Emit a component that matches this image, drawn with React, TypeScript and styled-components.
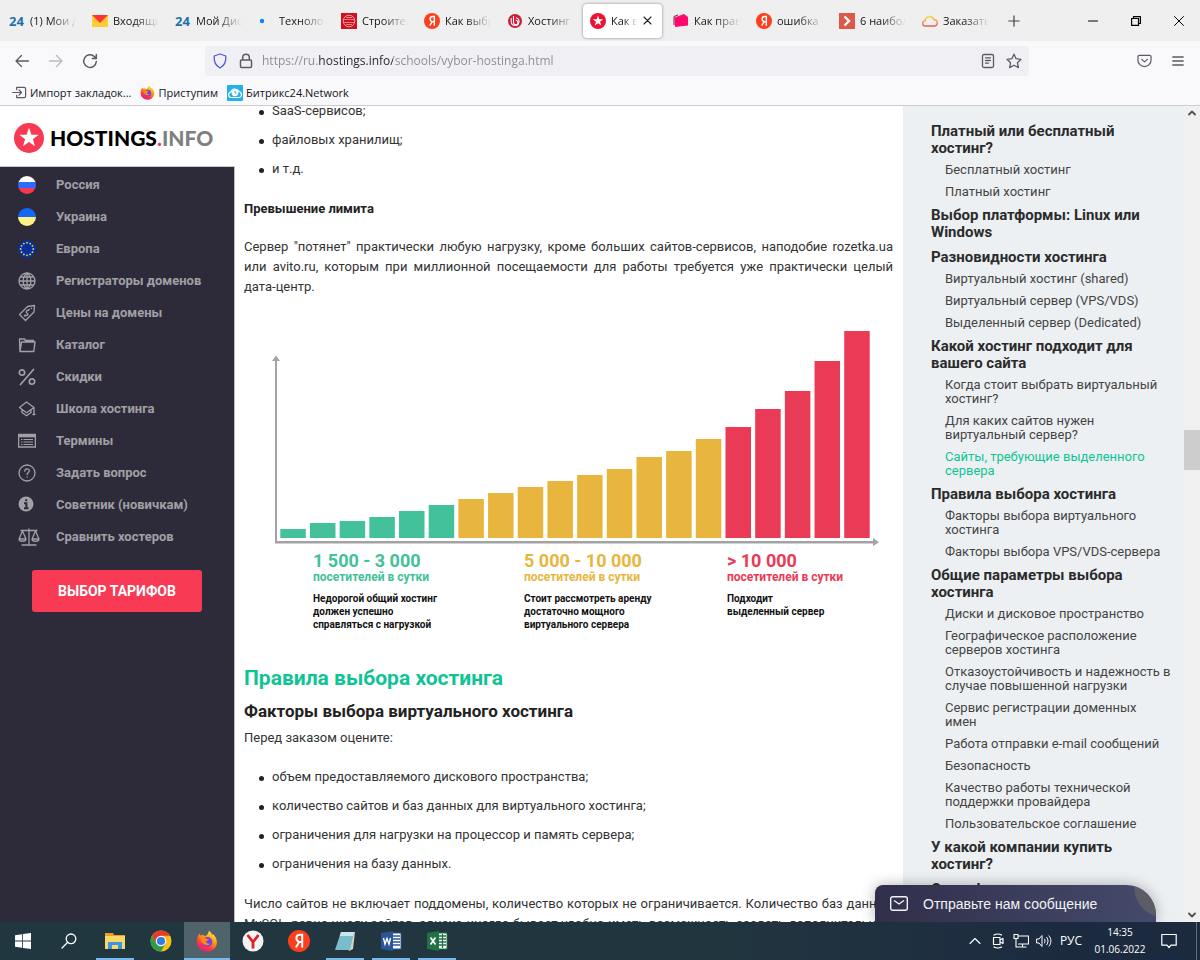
import React from "react";
import styled, { createGlobalStyle, css } from "styled-components";

const GlobalStyle = createGlobalStyle`
  * { box-sizing: border-box; }
  html, body, #root { height: 100%; }
  body { margin: 0; overflow: hidden; }
  button { font: inherit; border: 0; padding: 0; background: none; color: inherit; cursor: pointer; }
  a { color: inherit; text-decoration: none; }
  ul { list-style: none; margin: 0; padding: 0; }
  svg { display: block; flex: none; }
`;

const UI_FONT = `"Open Sans", "Noto Sans", sans-serif`;
const TEXT_FONT = `Roboto, "Noto Sans", sans-serif`;

const Screen = styled.div`
  display: flex;
  flex-direction: column;
  height: 100vh;
  background: #fff;
`;

/* ---------- Browser chrome ---------- */

const TabStrip = styled.div`
  display: flex;
  align-items: center;
  flex: none;
  height: 41px;
  padding-left: 1px;
  background: #efefef;
  font: 11px/16px ${UI_FONT};
  color: #15141a;
`;

const Tab = styled.button<{ $active?: boolean }>`
  display: flex;
  align-items: center;
  gap: 5px;
  flex: none;
  width: 83px;
  height: 34px;
  padding: 0 7px 0 8px;
  text-align: left;
  ${(p) =>
    p.$active &&
    css`
      width: 79px;
      margin: 0 3px 0 1px;
      padding: 0 10px 0 7px;
      border-radius: 4px;
      background: #fff;
      box-shadow: 0 0 3px rgba(0, 0, 0, 0.45);
    `}
`;

const TabTitle = styled.span`
  flex: 1;
  min-width: 0;
  overflow: hidden;
  white-space: nowrap;
  mask-image: linear-gradient(to right, #000 45%, transparent 98%);
`;

const NewTab = styled.button`
  display: flex;
  align-items: center;
  justify-content: center;
  width: 34px;
  height: 34px;
`;

const WindowButtons = styled.div`
  display: flex;
  margin-left: auto;
`;

const WindowButton = styled.button`
  display: flex;
  align-items: center;
  justify-content: center;
  width: 43px;
  height: 41px;
`;

const NavBar = styled.div`
  display: flex;
  align-items: center;
  flex: none;
  height: 39px;
  padding: 0 5px;
  background: #f9f9fb;
`;

const IconButton = styled.button`
  display: flex;
  align-items: center;
  justify-content: center;
  flex: none;
  width: 34px;
  height: 30px;
`;

const AddressBox = styled.div`
  display: flex;
  align-items: center;
  flex: 1;
  height: 30px;
  margin: 0 98px;
  padding: 0 2px 0 6px;
  border-radius: 4px;
  background: #f0f0f4;
`;

const SmallIconButton = styled(IconButton)`
  width: 26px;
  height: 26px;
`;

const AddressShield = styled(SmallIconButton)`
  width: 18px;
  margin-right: 4px;
`;

const AddressInput = styled.input`
  flex: 1;
  min-width: 0;
  height: 22px;
  margin-left: 3px;
  padding: 0;
  border: 0;
  outline: 0;
  font: 12px/20px ${UI_FONT};
  color: transparent;
  background: linear-gradient(to right, #8a8a92 56px, #25242c 56px 131px, #8a8a92 131px);
  background-clip: text;
`;

const BookmarkBar = styled.nav`
  display: flex;
  align-items: center;
  gap: 9px;
  flex: none;
  height: 26px;
  padding: 0 12px;
  border-bottom: 1px solid #cccccf;
  background: #f9f9fb;
  font: 11px/16px ${UI_FONT};
  color: #15141a;
`;

const Bookmark = styled.a`
  display: flex;
  align-items: center;
  gap: 3px;
  white-space: nowrap;
`;

/* ---------- Page ---------- */

const Page = styled.div`
  position: relative;
  display: flex;
  flex: 1;
  min-height: 0;
  overflow: hidden;
  font-family: ${TEXT_FONT};
`;

const Sidebar = styled.aside`
  display: flex;
  flex-direction: column;
  flex: none;
  width: 235px;
  border-right: 1px solid #b9b9c2;
  background: #2d2b39;
`;

const LogoLink = styled.a`
  display: flex;
  align-items: center;
  gap: 6px;
  height: 61px;
  margin-right: -1px;
  padding: 4px 14px 0;
  border-bottom: 1px solid #c9c9cf;
  background: #fff;
  font: 900 21px/30px Lato, sans-serif;
  color: #000;
`;

const LogoAccent = styled.span<{ $color: string }>`
  color: ${(p) => p.$color};
`;

const MenuItem = styled.a`
  display: flex;
  align-items: center;
  height: 32px;
  padding-left: 18px;
  font-size: 13px;
  line-height: 20px;
  font-weight: 700;
  color: #a1a0a5;
`;

const MenuList = styled.ul`
  padding-top: 2px;
`;

const MenuIcon = styled.span`
  display: flex;
  width: 38px;
`;

const TariffButton = styled.button`
  height: 42px;
  margin: 17px 32px 0;
  border-radius: 3px;
  background: #f83a55;
  font-size: 14px;
  font-weight: 700;
  color: #fff;
`;

const Article = styled.main`
  flex: 1;
  min-width: 0;
  overflow: hidden;
  padding: 0 10px 0 9px;
  font-size: 13px;
  line-height: 20px;
  color: #333;
`;

const BulletList = styled.ul<{ $scrolled?: boolean }>`
  display: flex;
  flex-direction: column;
  gap: 9px;
  padding-left: 28px;
  margin: ${(p) => (p.$scrolled ? "-5px 0 20px" : "19px 0 20px")};
`;

const Bullet = styled.li`
  display: flex;
  align-items: center;
  white-space: nowrap;
  &::before {
    content: "";
    width: 5px;
    height: 5px;
    margin: 2px 8px 0 -13px;
    border-radius: 50%;
    background: #222;
  }
`;

const Strong = styled.h4`
  margin: 0 0 18px;
  font-size: 13px;
  line-height: 20px;
  color: #222;
`;

const Paragraph = styled.p`
  margin: 0;
`;

const JustifiedLine = styled.span`
  display: block;
  white-space: nowrap;
  text-align: justify;
  text-align-last: justify;
`;

const Figure = styled.figure`
  margin: 23px 0 0;
`;

const ChartSvg = styled.svg`
  width: 100%;
  height: auto;
`;

const Legend = styled.figcaption`
  display: grid;
  grid-template-columns: 211fr 203fr 166fr;
  padding: 5px 0 0 69px;
`;

const LegendItem = styled.div<{ $color: string }>`
  color: ${(p) => p.$color};
  font-weight: 700;
  white-space: pre-line;
`;

const LegendRange = styled.div`
  font-size: 18px;
  line-height: 19px;
`;

const LegendUnit = styled.div`
  font-size: 12px;
  line-height: 14px;
`;

const LegendText = styled.div`
  margin-top: 8px;
  font-size: 10px;
  line-height: 13px;
  color: #111;
`;

const SectionTitle = styled.h2`
  margin: 32px 0 0;
  font-size: 21px;
  line-height: 30px;
  color: #0fc494;
`;

const SubTitle = styled.h3`
  margin: 6px 0 5px;
  font-size: 17px;
  line-height: 24px;
  color: #222;
`;

const Toc = styled.nav`
  flex: none;
  width: 281px;
  overflow: hidden;
  padding: 17px 0 0 28px;
  background: #edf0f3;
  white-space: pre;
`;

const TocHeading = styled.a`
  display: block;
  margin-bottom: 8px;
  font-size: 15px;
  line-height: 17px;
  font-weight: 700;
  color: #2b2b2b;
`;

const TocItem = styled.a<{ $active?: boolean }>`
  display: block;
  margin-bottom: 8px;
  padding-left: 14px;
  font-size: 13px;
  line-height: 14px;
  color: ${(p) => (p.$active ? "#0fc494" : "#444")};
  ${TocHeading} + & {
    margin-top: -2px;
  }
`;

const ScrollBar = styled.div`
  display: flex;
  flex-direction: column;
  align-items: center;
  flex: none;
  width: 16px;
  padding: 4px 0;
  background: #f0f0f0;
`;

const ScrollSpace = styled.div<{ $grow: number }>`
  flex: ${(p) => p.$grow};
`;

const ScrollThumb = styled.div`
  width: 16px;
  height: 40px;
  background: #cdcdcd;
`;

const ChatBar = styled.button`
  position: absolute;
  right: 44px;
  bottom: 0;
  display: flex;
  align-items: center;
  gap: 15px;
  width: 281px;
  height: 37px;
  padding-left: 15px;
  border-radius: 8px 30px 0 0;
  overflow: hidden;
  background: linear-gradient(to right, #302f4b, #454a6b);
  box-shadow: 0 0 14px rgba(0, 0, 0, 0.3);
  font: 14px/20px "Liberation Sans", sans-serif;
  color: #f2f2f6;
`;

const ChatCorner = styled.svg`
  position: absolute;
  right: 0;
  top: 0;
`;

/* ---------- Taskbar ---------- */

const Taskbar = styled.footer`
  display: flex;
  flex: none;
  height: 38px;
  background: linear-gradient(to right, #213740, #21353f 60%, #1c2a40 90%);
  font: 12px/16px ${UI_FONT};
  color: #fff;
`;

const TaskButton = styled.button<{ $state?: "open" | "active" }>`
  position: relative;
  display: flex;
  align-items: center;
  justify-content: center;
  width: 46px;
  height: 38px;
  background: ${(p) => (p.$state === "active" ? "#50636b" : "none")};
  ${(p) =>
    p.$state &&
    css`
      &::after {
        content: "";
        position: absolute;
        bottom: 0;
        left: ${p.$state === "active" ? "0" : "4px"};
        right: ${p.$state === "active" ? "0" : "4px"};
        height: 2px;
        background: #76b9ed;
      }
    `}
`;

const Tray = styled.div`
  display: flex;
  align-items: center;
  gap: 6px;
  margin-left: auto;
`;

const TrayButton = styled.button`
  display: flex;
  align-items: center;
  justify-content: center;
  width: 17px;
  height: 38px;
`;

const Language = styled.button`
  margin-left: 1px;
  width: 24px;
  font-size: 12px;
`;

const Clock = styled.time`
  width: 60px;
  margin-left: 1px;
  font-size: 10px;
  line-height: 17px;
  text-align: center;
`;

const NoticeButton = styled(TrayButton)`
  width: 26px;
  margin-right: 8px;
`;

const DesktopEdge = styled.span`
  width: 4px;
  height: 38px;
  border-left: 1px solid #5f6c7c;
`;

/* ---------- Icons ---------- */

const star = "M0-1 L.24-.32 L.95-.31 L.38.12 L.59.81 L0 .4 L-.59.81 L-.38.12 L-.95-.31 L-.24-.32Z";

const StarBadge = ({ size, color = "#f83a55" }: { size: number; color?: string }) => (
  <svg width={size} height={size} viewBox="-15 -15 30 30">
    <circle r="15" fill={color} />
    <path d={star} transform="scale(10.2)" fill="#fff" />
  </svg>
);

const YaBadge = ({ size }: { size: number }) => (
  <svg width={size} height={size} viewBox="0 0 22 22">
    <circle cx="11" cy="11" r="11" fill="#fc3f1d" />
    <path d="M14.2 17.5V4.8h-2.1c-2.4 0-3.7 1.3-3.7 3.4 0 1.8.9 2.8 2.6 3.7M11.5 11.4 7.9 17.5M11 11.9h3" fill="none" stroke="#fff" strokeWidth="2" />
  </svg>
);

const FirefoxIcon = ({ size }: { size: number }) => (
  <svg width={size} height={size} viewBox="0 0 24 24">
    <defs>
      <linearGradient id="fx" x1="0.8" y1="0" x2="0.2" y2="1">
        <stop offset="0" stopColor="#fff44f" />
        <stop offset=".4" stopColor="#ff980e" />
        <stop offset=".7" stopColor="#ff3647" />
        <stop offset="1" stopColor="#e31587" />
      </linearGradient>
    </defs>
    <path d="M2.2 6.5 4 3.8l1 2.3 3-1 1.8 1.6C11.3 6 13 5 14.2.8c2 1.4 2.8 3 3.2 4.5l1.6-.8c3.2 3.6 4.4 7.5 3.6 11C21.400 20.400 17 23.500 12 23.500 6 23.500 1 18.800 1 12.800c0-2.500.3-4.500 1.200-6.300Z" fill="url(#fx)" />
    <circle cx="12.400" cy="13" r="5.400" fill="#7542e5" />
    <path d="M5 8.500c2-1 4.500-.5 6 1l3 .6c-.3 1.500-1.800 1.800-3.200 2 .2 2.500 2.600 3.400 5 2.500-1.300 2-4.400 2.600-6.800 1.200C6.500 14.500 5 12 5 8.500Z" fill="#ff8a16" />
  </svg>
);

const B24 = () => (
  <svg width="16" height="16" viewBox="0 0 16 16">
    <text x="0" y="13" fontFamily="Open Sans" fontWeight="700" fontSize="13" fill="#1f6fae">24</text>
  </svg>
);

const favicons: Record<string, React.ReactNode> = {
  b24: <B24 />,
  mail: (
    <svg width="16" height="16" viewBox="0 0 16 16">
      <path d="M0 2h16v12H0z" fill="#ffcc33" />
      <path d="M0 2h16L8 10Z" fill="#f33" />
    </svg>
  ),
  dot: (
    <svg width="16" height="16" viewBox="0 0 16 16">
      <circle cx="4" cy="8" r="2.200" fill="#0a84ff" />
    </svg>
  ),
  red: (
    <svg width="16" height="16" viewBox="0 0 16 16">
      <path d="M0 0h16v16H0z" fill="#d3101f" />
      <circle cx="8" cy="8" r="5.800" fill="none" stroke="#f2a0a5" />
      <path d="M3 6.500h10M3 9.500h10M5 4.500h6M5 11.500h6" stroke="#f2a0a5" strokeWidth=".8" />
    </svg>
  ),
  ya: <YaBadge size={16} />,
  beget: (
    <svg width="16" height="16" viewBox="0 0 16 16">
      <circle cx="8" cy="8" r="7" fill="#cf1b3b" />
      <path d="M6.500 3v6.500a2.200 2.200 0 1 0 2.200-2.200M9 4.800a3.900 3.900 0 1 1-4.800 4.200V5" fill="none" stroke="#fff" strokeWidth="1.100" />
    </svg>
  ),
  star: <StarBadge size={16} color="#ee1133" />,
  pink: (
    <svg width="16" height="16" viewBox="0 0 16 16">
      <path d="M1.500 4.500 11 1l4 3v8.500L2 14Z" fill="#ff0a6c" />
      <path d="M1 12V3.500L5 2" fill="none" stroke="#8a1540" />
    </svg>
  ),
  arrow: (
    <svg width="16" height="16" viewBox="0 0 16 16">
      <path d="M0 0h16v16H0z" fill="#dd5a49" />
      <path d="m5.500 3.500 4.500 4.500-4.500 4.500" fill="none" stroke="#fff" strokeWidth="2.400" />
    </svg>
  ),
  cloud: (
    <svg width="16" height="16" viewBox="0 0 16 16">
      <defs>
        <linearGradient id="cl" x1="0" y1="0" x2="0" y2="1">
          <stop offset="0" stopColor="#f8d64e" />
          <stop offset="1" stopColor="#ee5a5a" />
        </linearGradient>
      </defs>
      <path d="M3.500 13a2.700 2.700 0 0 1-.3-5.400C3.500 4.800 5.500 3.500 7.600 3.500c2 0 3.500 1.100 4.100 3 2 0 3.500 1.400 3.500 3.300 0 1.900-1.300 3.200-3.200 3.200Z" fill="none" stroke="url(#cl)" strokeWidth="1.400" />
    </svg>
  ),
};

const Line = ({ w = 16, h = w, vb = "0 0 16 16", d, color = "#5b5b66", sw = 1.3 }: { w?: number; h?: number; vb?: string; d: string; color?: string; sw?: number }) => (
  <svg width={w} height={h} viewBox={vb} fill="none" stroke={color} strokeWidth={sw} strokeLinecap="round" strokeLinejoin="round">
    <path d={d} />
  </svg>
);

const Flag = ({ bands }: { bands: [string, number][] }) => {
  let y = 0;
  return (
    <svg width="18" height="18" viewBox="0 0 18 18">
      <clipPath id={`f${bands.length}`}>
        <circle cx="9" cy="9" r="9" />
      </clipPath>
      <g clipPath={`url(#f${bands.length})`}>
        {bands.map(([color, height]) => {
          const top = y;
          y += height;
          return <rect key={color} y={top} width="18" height={height} fill={color} />;
        })}
      </g>
    </svg>
  );
};

const EuroFlag = () => (
  <svg width="18" height="18" viewBox="-9 -9 18 18">
    <circle r="9" fill="#0a2f9c" />
    {Array.from({ length: 12 }, (_, i) => (
      <circle key={i} cx={6.3 * Math.sin((i * Math.PI) / 6)} cy={6.3 * Math.cos((i * Math.PI) / 6)} r=".9" fill="#e9dc3c" />
    ))}
  </svg>
);

const G = "#a1a0a5";
const menu: [string, React.ReactNode][] = [
  ["Россия", <Flag bands={[["#ffffff", 6], ["#2f6bff", 6], ["#f8384f", 6]]} />],
  ["Украина", <Flag bands={[["#1168f5", 9], ["#fff08a", 9]]} />],
  ["Европа", <EuroFlag />],
  ["Регистраторы доменов", <Line w={18} vb="0 0 18 18" color={G} sw={1.3} d="M9 1a8 8 0 1 0 0 16A8 8 0 1 0 9 1ZM9 1v16M1 9h16M2.200 5h13.600M2.200 13h13.600M9 1C3.800 5 3.800 13 9 17M9 1c5.200 4 5.200 12 0 16" />],
  ["Цены на домены", <Line w={18} vb="0 0 18 18" color={G} sw={1.3} d="M1.500 10.500 9.500 2.500l7-1-.5 6.500-8.500 8.500ZM13.500 4.200v.4M10.500 6.500C9 6 7.500 7.500 8.500 8.700s2 1 1 2.300-2 .5-2.500 0M10.500 6l.8-.8M6.500 12l.6-.6" />],
  ["Каталог", <Line w={18} vb="0 0 18 18" color={G} sw={1.4} d="M2 15.500 1.500 3h5l1 1.500h8V6M2 15.500 3.500 6H17l-1.200 9.500Z" />],
  ["Скидки", <Line w={18} vb="0 0 18 18" color={G} sw={1.7} d="M15.500 1.500 2.500 16.500M4 1.800a2.700 2.700 0 1 0 0 5.400 2.700 2.700 0 1 0 0-5.400M14 10.800a2.700 2.700 0 1 0 0 5.400 2.700 2.700 0 1 0 0-5.400" />],
  ["Школа хостинга", <Line w={18} vb="0 0 18 18" color={G} sw={1.3} d="M1.500 7.500 8.500 2l7.500 5.500-7.500 5.300ZM4 10v2.500l4.500 3.200 4.500-3.200V10M16 7.500V14M15 14.500h2" />],
  ["Термины", (
    <svg width="18" height="18" viewBox="0 0 18 18" fill="none" stroke={G}>
      <path d="M.6 2.500h16.800v12.500H.6z" strokeWidth="1.300" />
      <path d="M.6 3.800h16.800" strokeWidth="3" />
      <path d="M3 7.500h1.500M3 10h1.500M3 12.500h1.500M5.500 7.500H15M5.500 10H15M5.500 12.500H15" strokeWidth="1.200" />
    </svg>
  )],
  ["Задать вопрос", <Line w={18} vb="0 0 18 18" color={G} sw={1.3} d="M9 1a8 8 0 1 0 0 16A8 8 0 1 0 9 1ZM6.800 7.200c0-1.500 1-2.300 2.200-2.300s2.300.8 2.300 2.100c0 1.500-2.200 1.600-2.200 3.500M9.100 12.900v.2" />],
  ["Советник (новичкам)", (
    <svg width="16" height="18" viewBox="0 0 16 18">
      <circle cx="8" cy="8" r="7.500" fill={G} />
      <path d="M8.200 3.200v2M6 7.300h2.400v5M6 12.300h4.500" fill="none" stroke="#2d2b39" strokeWidth="2" />
    </svg>
  )],
  ["Сравнить хостеров", <Line w={22} h={18} vb="0 0 22 18" color={G} sw={1.3} d="M11 1v15M4 17h14M3 2.500h16M4.500 3 1 11h7ZM17.500 3 14 11h7ZM1 11c0 3 7 3 7 0M14 11c0 3 7 3 7 0" />],
];

/* ---------- Data ---------- */

const tabs: [string, string][] = [
  ["b24", "(1) Мои Дела"],
  ["mail", "Входящие"],
  ["b24", "Мой Диск"],
  ["dot", "Технологии"],
  ["red", "Строительство"],
  ["ya", "Как выбрать"],
  ["beget", "Хостинг сайтов"],
  ["star", "Как выбрать"],
  ["pink", "Как правильно"],
  ["ya", "ошибка сайта"],
  ["arrow", "6 наиболее"],
  ["cloud", "Заказать хостинг"],
];

const toc: { head: string; items: string[] }[] = [
  { head: "Платный или бесплатный\nхостинг?", items: ["Бесплатный хостинг", "Платный хостинг"] },
  { head: "Выбор платформы: Linux или\nWindows", items: [] },
  { head: "Разновидности хостинга", items: ["Виртуальный хостинг (shared)", "Виртуальный сервер (VPS/VDS)", "Выделенный сервер (Dedicated)"] },
  { head: "Какой хостинг подходит для\nвашего сайта", items: ["Когда стоит выбрать виртуальный\nхостинг?", "Для каких сайтов нужен\nвиртуальный сервер?", "Сайты, требующие выделенного\nсервера"] },
  { head: "Правила выбора хостинга", items: ["Факторы выбора виртуального\nхостинга", "Факторы выбора VPS/VDS-сервера"] },
  {
    head: "Общие параметры выбора\nхостинга",
    items: [
      "Диски и дисковое пространство",
      "Географическое расположение\nсерверов хостинга",
      "Отказоустойчивость и надежность в\nслучае повышенной нагрузки",
      "Сервис регистрации доменных\nимен",
      "Работа отправки e-mail сообщений",
      "Безопасность",
      "Качество работы технической\nподдержки провайдера",
      "Пользовательское соглашение",
    ],
  },
  { head: "У какой компании купить\nхостинг?", items: [] },
  { head: "Сертификаты", items: [] },
];

const GREEN = "#42c19a";
const AMBER = "#e8b63e";
const RED = "#ea3b56";
const bars = [9, 15, 17, 21, 27, 33, 39, 45, 51, 57, 63, 69, 81, 87, 99, 111, 129, 147, 177, 207];

const Chart = () => (
  <ChartSvg viewBox="0 0 649 226" role="img" aria-label="Посещаемость сайта">
    <g fill="#a3a3a3">
      <path d="M31 40v183.500h600v-2.500H33V40Z" />
      <path d="M28 41 32 35.500 36 41ZM629 218 635 222.200 629 226Z" />
    </g>
    {bars.map((h, i) => (
      <rect key={i} x={36.3 + i * 29.68} y={218 - h} width="25.500" height={h} fill={i < 6 ? GREEN : i < 15 ? AMBER : RED} />
    ))}
  </ChartSvg>
);

const legend = [
  { color: GREEN, range: "1 500 - 3 000", text: "Недорогой общий хостинг\nдолжен успешно\nсправляться с нагрузкой" },
  { color: AMBER, range: "5 000 - 10 000", text: "Стоит рассмотреть аренду\nдостаточно мощного\nвиртуального сервера" },
  { color: RED, range: "> 10 000", text: "Подходит\nвыделенный сервер" },
];

const OfficeIcon = ({ color, letter, sheet }: { color: string; letter: React.ReactNode; sheet: string }) => (
  <svg width="22" height="22" viewBox="0 0 22 22">
    <path d="M11 3h10v16H11z" fill="#fff" stroke={color} />
    <path d={sheet} stroke={color} strokeWidth="1.300" />
    <path d="M1 3 13 1v20L1 19Z" fill={color} />
    {letter}
  </svg>
);

const App = () => (
  <Screen>
    <GlobalStyle />
    <TabStrip>
      {tabs.map(([icon, title], i) => (
        <Tab key={i} $active={icon === "star"}>
          {favicons[icon]}
          <TabTitle>{title}</TabTitle>
          {icon === "star" && <Line w={9} vb="0 0 9 9" d="m1 1 7 7M8 1 1 8" color="#222" sw={1.1} />}
        </Tab>
      ))}
      <NewTab aria-label="Новая вкладка"><Line w={12} vb="0 0 12 12" d="M6 .8v10.400M.8 6h10.400" color="#444" sw={1.2} /></NewTab>
      <WindowButtons>
        <WindowButton aria-label="Свернуть"><Line w={10} vb="0 0 10 10" d="M.5 5h9" color="#000" sw={1} /></WindowButton>
        <WindowButton aria-label="Развернуть"><Line w={10} vb="0 0 10 10" d="M.6 2.500h6.900v6.900H.6ZM2.500 2.500V.6h6.900v6.900H7.500" color="#000" sw={1.2} /></WindowButton>
        <WindowButton aria-label="Закрыть"><Line w={10} vb="0 0 10 10" d="m.5.5 9 9M9.500.5l-9 9" color="#000" sw={1} /></WindowButton>
      </WindowButtons>
    </TabStrip>

    <NavBar>
      <IconButton aria-label="Назад"><Line d="M14.500 8H2M7.500 2.500 2 8l5.500 5.500" /></IconButton>
      <IconButton aria-label="Вперёд"><Line d="M1.500 8H14M8.500 2.500 14 8l-5.500 5.500" color="#b9b9c0" /></IconButton>
      <IconButton aria-label="Обновить"><Line d="M14.300 8.500A6.300 6.300 0 1 1 12.500 3.700L14 5.200M14.300 1.500v4h-4" sw={1.5} /></IconButton>
      <AddressBox>
        <AddressShield aria-label="Защита"><Line d="M8 1 13.800 3c.4 5-1.300 9.500-5.800 12C3.500 12.500 1.800 8 2.200 3Z" color="#5257d9" /></AddressShield>
        <SmallIconButton aria-label="Сведения о сайте"><Line d="M3.500 7h9a1 1 0 0 1 1 1v5.500a1 1 0 0 1-1 1h-9a1 1 0 0 1-1-1V8a1 1 0 0 1 1-1ZM4.700 7V4.500a3.300 3.300 0 0 1 6.600 0V7" sw={1.5} /></SmallIconButton>
        <AddressInput aria-label="Адрес" defaultValue="https://ru.hostings.info/schools/vybor-hostinga.html" />
        <SmallIconButton aria-label="Режим чтения"><Line d="M4 1.500h8a1.500 1.500 0 0 1 1.500 1.500v10a1.500 1.500 0 0 1-1.500 1.500H4A1.500 1.500 0 0 1 2.500 13V3A1.500 1.500 0 0 1 4 1.500ZM5.500 4.800h5M5.500 7.500h5M5.500 10.200h3" /></SmallIconButton>
        <SmallIconButton aria-label="В закладки"><Line d="M8 1.200 10.100 5.700 15 6.300 11.400 9.700 12.400 14.600 8 12.200 3.600 14.600 4.600 9.700 1 6.300 5.900 5.700Z" /></SmallIconButton>
      </AddressBox>
      <IconButton aria-label="Pocket"><Line d="M2.500 2.500h11a1.500 1.500 0 0 1 1.500 1.500v3.500a7 7 0 0 1-14 0V4a1.500 1.500 0 0 1 1.500-1.500ZM5 6.800l3 2.700 3-2.700" w={15} /></IconButton>
      <IconButton aria-label="Меню"><Line w={12} vb="0 0 12 12" d="M.8 2h10.400M.8 6h10.400M.8 10h10.400" /></IconButton>
    </NavBar>

    <BookmarkBar>
      <Bookmark href="#"><Line w={15} d="M5 5V2.500h8a1.500 1.500 0 0 1 1.500 1.500v8a1.500 1.500 0 0 1-1.500 1.500H5V11M.8 8H10M7.500 5.300 10.200 8l-2.700 2.700" />Импорт закладок...</Bookmark>
      <Bookmark href="#"><FirefoxIcon size={15} />Приступим</Bookmark>
      <Bookmark href="#">
        <svg width="16" height="16" viewBox="0 0 16 16">
          <rect width="16" height="16" rx="1" fill="#21b2e8" />
          <path d="M4 12.500a2.700 2.700 0 0 1-.3-5.300A4.500 4.500 0 0 1 12 6.500a3.100 3.100 0 0 1 .3 6Z" fill="none" stroke="#fff" strokeWidth="1.200" />
          <circle cx="8" cy="7.800" r="3.400" fill="#fff" />
          <path d="M8 6v2h1.500" fill="none" stroke="#21b2e8" />
        </svg>
        Битрикс24.Network
      </Bookmark>
    </BookmarkBar>

    <Page>
      <Sidebar>
        <LogoLink href="#">
          <StarBadge size={30} />
          <span>HOSTINGS<LogoAccent $color="#f83a55">.</LogoAccent><LogoAccent $color="#808080">INFO</LogoAccent></span>
        </LogoLink>
        <MenuList>
          {menu.map(([label, icon]) => (
            <li key={label}>
              <MenuItem href="#"><MenuIcon>{icon}</MenuIcon>{label}</MenuItem>
            </li>
          ))}
        </MenuList>
        <TariffButton>ВЫБОР ТАРИФОВ</TariffButton>
      </Sidebar>

      <Article>
        <BulletList $scrolled>
          <Bullet>SaaS-сервисов;</Bullet>
          <Bullet>файловых хранилищ;</Bullet>
          <Bullet>и т.д.</Bullet>
        </BulletList>
        <Strong>Превышение лимита</Strong>
        <Paragraph>
          <JustifiedLine>Сервер "потянет" практически любую нагрузку, кроме больших сайтов-сервисов, наподобие rozetka.ua</JustifiedLine>
          <JustifiedLine>или avito.ru, которым при миллионной посещаемости для работы требуется уже практически целый</JustifiedLine>
          дата-центр.
        </Paragraph>
        <Figure>
          <Chart />
          <Legend>
            {legend.map((l) => (
              <LegendItem key={l.range} $color={l.color}>
                <LegendRange>{l.range}</LegendRange>
                <LegendUnit>посетителей в сутки</LegendUnit>
                <LegendText>{l.text}</LegendText>
              </LegendItem>
            ))}
          </Legend>
        </Figure>
        <SectionTitle>Правила выбора хостинга</SectionTitle>
        <SubTitle>Факторы выбора виртуального хостинга</SubTitle>
        <Paragraph>Перед заказом оцените:</Paragraph>
        <BulletList>
          <Bullet>объем предоставляемого дискового пространства;</Bullet>
          <Bullet>количество сайтов и баз данных для виртуального хостинга;</Bullet>
          <Bullet>ограничения для нагрузки на процессор и память сервера;</Bullet>
          <Bullet>ограничения на базу данных.</Bullet>
        </BulletList>
        <Paragraph>
          <JustifiedLine>Число сайтов не включает поддомены, количество которых не ограничивается. Количество баз данных</JustifiedLine>
          <JustifiedLine>MySQL, равно числу сайтов, однако иногда бывает удобно иметь возможность создать дополнительные</JustifiedLine>
        </Paragraph>
      </Article>

      <Toc>
        {toc.map((s) => (
          <React.Fragment key={s.head}>
            <TocHeading href="#">{s.head}</TocHeading>
            {s.items.map((item) => (
              <TocItem key={item} href="#" $active={item.startsWith("Сайты")}>{item}</TocItem>
            ))}
          </React.Fragment>
        ))}
      </Toc>

      <ScrollBar>
        <Line w={8} h={6} vb="0 0 8 6" d="m1 4.500 3-3 3 3" color="#505050" sw={1.8} />
        <ScrollSpace $grow={314} />
        <ScrollThumb />
        <ScrollSpace $grow={442} />
        <Line w={8} h={6} vb="0 0 8 6" d="m1 1.500 3 3 3-3" color="#505050" sw={1.8} />
      </ScrollBar>

      <ChatBar>
        <svg width="18" height="15" viewBox="0 0 18 15" fill="none" stroke="#f2f2f6" strokeWidth="1.400">
          <rect x=".7" y=".7" width="16.600" height="13.600" rx="2" />
          <path d="m4 4.500 5 3.500 5-3.500" />
        </svg>
        Отправьте нам сообщение
        <ChatCorner width="22" height="31" viewBox="0 0 22 31">
          <path d="M0 0h22v31C8 27 0 16 0 0Z" fill="#5b5c66" />
        </ChatCorner>
      </ChatBar>
    </Page>

    <Taskbar>
      <TaskButton aria-label="Пуск">
        <svg width="16" height="16" viewBox="0 0 16 16"><path d="M0 2.300 7.200 1.200v6.400H0ZM8 1.100 16 0v7.600H8ZM0 8.400h7.200v6.400L0 13.700ZM8 8.400h8V16l-8-1.100Z" fill="#fff" /></svg>
      </TaskButton>
      <TaskButton aria-label="Поиск"><Line w={16} d="M10 1a4.800 4.800 0 1 0 0 9.600A4.800 4.800 0 1 0 10 1ZM6.500 9.500 1 15" color="#fff" /></TaskButton>
      <TaskButton aria-label="Проводник" $state="open">
        <svg width="20" height="18" viewBox="0 0 20 18">
          <path d="M0 1h8l1 2h11v14H0Z" fill="#e6a21c" />
          <path d="M0 4h20v13H0Z" fill="#fcd667" />
          <path d="M3 17V10h14v7h-4v-4H7v4Z" fill="#3b97e0" />
        </svg>
      </TaskButton>
      <TaskButton aria-label="Chrome">
        <svg width="22" height="22" viewBox="-11 -11 22 22">
          <circle r="10.500" fill="#fbc116" />
          <path d="M-9.090-5.250A10.500 10.500 0 0 1 9.090-5.250H0L-4.550 2.630Z" fill="#e33b2e" />
          <path d="M-9.090-5.250A10.500 10.500 0 0 0 0 10.500L4.550 2.630H-4.550Z" fill="#2a9d4b" />
          <circle r="5.200" fill="#fff" />
          <circle r="4.100" fill="#3778e8" />
        </svg>
      </TaskButton>
      <TaskButton aria-label="Firefox" $state="active"><FirefoxIcon size={22} /></TaskButton>
      <TaskButton aria-label="Яндекс Браузер">
        <svg width="22" height="22" viewBox="0 0 22 22">
          <circle cx="11" cy="11" r="10.500" fill="#f3f3f3" />
          <path d="m5.500 5 5.500 7 5.500-7M11 12v6.500" fill="none" stroke="#e01f26" strokeWidth="2.800" />
        </svg>
      </TaskButton>
      <TaskButton aria-label="Яндекс"><YaBadge size={22} /></TaskButton>
      <TaskButton aria-label="Блокнот" $state="open">
        <svg width="22" height="20" viewBox="0 0 22 20">
          <path d="M7 1h14l-2 17-4 2Z" fill="#d9d2c2" />
          <path d="M7 1h13l-4 18H1Z" fill="#79bccb" />
          <path d="M7 1h13l-1 4H5.700Z" fill="#c9e6ec" />
        </svg>
      </TaskButton>
      <TaskButton aria-label="Word" $state="open">
        <OfficeIcon color="#2a5699" sheet="M13 6h7M13 9h7M13 12h7M13 15h7" letter={<path d="m3.500 8 1.500 6 2-5.500L9 14l1.500-6" fill="none" stroke="#fff" strokeWidth="1.400" />} />
      </TaskButton>
      <TaskButton aria-label="Excel" $state="open">
        <OfficeIcon color="#207245" sheet="M13 6h7M13 9h7M13 12h7M13 15h7M16.500 4v14" letter={<path d="m4.500 7.500 5 7M9.500 7.500l-5 7" stroke="#fff" strokeWidth="1.700" />} />
      </TaskButton>
      <Tray>
        <TrayButton aria-label="Скрытые значки"><Line w={12} vb="0 0 12 12" d="m1 8.500 5-5 5 5" color="#fff" sw={1.1} /></TrayButton>
        <TrayButton aria-label="Камера"><Line d="M3.500 4.500h6.500v7H3.500ZM10 7l3-1.500v5L10 9M4 2c2-1.300 5.500-1.300 7.500 0M4 14c2 1.300 5.500 1.300 7.500 0" color="#fff" sw={1.2} /></TrayButton>
        <TrayButton aria-label="Сеть"><Line d="M5.500 3h10v8h-10M1 1.500h4v4H1ZM3 5.500V14h10M9.500 11v3" color="#fff" sw={1.1} /></TrayButton>
        <TrayButton aria-label="Громкость"><Line d="M1 6h2l3-3.500v11L3 10H1ZM8.500 6c.8 1.200.8 2.800 0 4M10.800 4.300c1.700 2.200 1.700 5.200 0 7.400M13 2.800c2.600 3 2.600 7.400 0 10.400" color="#fff" sw={1} /></TrayButton>
        <Language>РУС</Language>
        <Clock>14:35<br />01.06.2022</Clock>
        <NoticeButton aria-label="Уведомления"><Line w={16} d="M.8 1.500h14.400v10.700H10L8 14.500 6 12.200H.8Z" color="#fff" sw={1.2} /></NoticeButton>
        <DesktopEdge />
      </Tray>
    </Taskbar>
  </Screen>
);

export default App;
